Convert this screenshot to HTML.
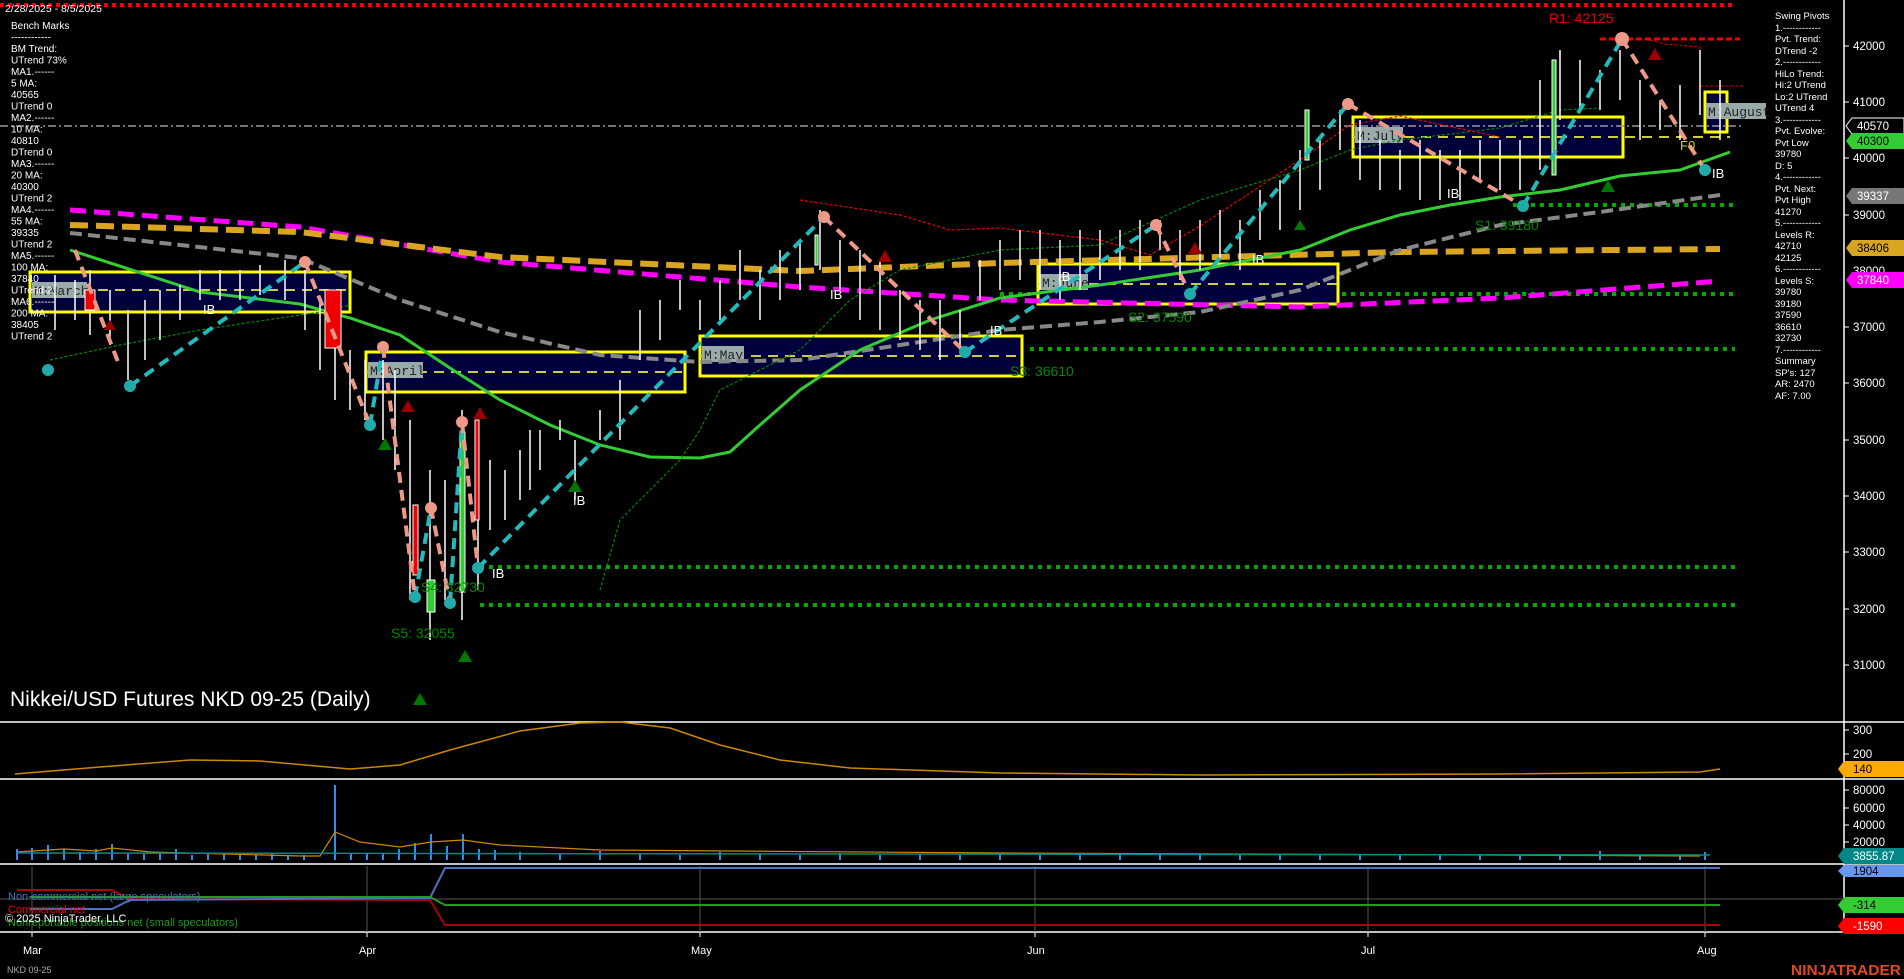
<!DOCTYPE html>
<html><head><meta charset="utf-8"><style>
html,body{margin:0;padding:0;background:#000;overflow:hidden}
svg{display:block;font-family:"Liberation Sans",Arial,sans-serif}
</style></head><body>
<svg width="1904" height="979" viewBox="0 0 1904 979" xmlns="http://www.w3.org/2000/svg">
<rect width="1904" height="979" fill="#000"/>
<line x1="0" y1="5" x2="1735" y2="5" stroke="#e00" stroke-width="4" stroke-dasharray="4,4"/>
<line x1="1600" y1="39" x2="1740" y2="39" stroke="#e00" stroke-width="3" stroke-dasharray="6,3"/>
<polyline points="1650,40 1665,44 1700,47 1700,86 1745,86" fill="none" stroke="#e00" stroke-width="1" stroke-dasharray="3,2"/>
<g stroke="#0a0" stroke-width="4" stroke-dasharray="4,5" fill="none">
<line x1="1513" y1="205" x2="1735" y2="205"/>
<line x1="1000" y1="294" x2="1735" y2="294"/>
<line x1="1030" y1="349" x2="1735" y2="349"/>
<line x1="480" y1="567" x2="1735" y2="567"/>
<line x1="480" y1="605" x2="1735" y2="605"/>
</g>
<g stroke="#ff0" stroke-width="3" fill="#00003a">
<rect x="30" y="272" width="320" height="40"/>
<rect x="366" y="352" width="319" height="40"/>
<rect x="700" y="336" width="322" height="40"/>
<rect x="1038" y="264" width="300" height="40"/>
<rect x="1353" y="117" width="270" height="40"/>
<rect x="1705" y="92" width="22" height="40"/>
</g>
<g stroke="#cc4" stroke-width="2" stroke-dasharray="10,7">
<line x1="30" y1="290" x2="350" y2="290"/>
<line x1="366" y1="372" x2="685" y2="372"/>
<line x1="700" y1="356" x2="1022" y2="356"/>
<line x1="1038" y1="284" x2="1338" y2="284"/>
<line x1="1353" y1="137" x2="1730" y2="137"/>
</g>
<line x1="0" y1="126" x2="1744" y2="126" stroke="#999" stroke-width="1.5" stroke-dasharray="8,3,2,3"/>
<g font-family="Liberation Mono,monospace" font-size="13" fill="#222">
<rect x="32" y="282" width="55" height="16" fill="#9aa"/><text x="34" y="295">M:March</text>
<rect x="368" y="362" width="55" height="16" fill="#9aa"/><text x="370" y="375">M:April</text>
<rect x="702" y="346" width="42" height="16" fill="#9aa"/><text x="704" y="359">M:May</text>
<rect x="1040" y="274" width="48" height="16" fill="#9aa"/><text x="1042" y="287">M:June</text>
<rect x="1355" y="127" width="48" height="16" fill="#9aa"/><text x="1357" y="140">M:July</text>
<rect x="1706" y="103" width="60" height="16" fill="#9aa"/><text x="1708" y="116">M:August</text>
</g>
<polyline points="70,210 300,227 500,262 800,287 1000,300 1300,307 1500,298 1720,281" fill="none" stroke="#f0f" stroke-width="5" stroke-dasharray="16,8"/>
<polyline points="70,225 300,232 500,257 800,271 1000,263 1400,252 1720,249" fill="none" stroke="#daa520" stroke-width="6" stroke-dasharray="18,8"/>
<polyline points="70,233 300,258 400,300 500,332 600,355 700,362 800,360 900,345 1000,330 1100,322 1200,312 1300,290 1400,250 1500,225 1600,212 1720,195" fill="none" stroke="#888" stroke-width="4" stroke-dasharray="12,6"/>
<polyline points="70,250 200,292 300,304 350,318 400,335 450,368 500,400 550,425 600,445 650,457 700,458 730,452 760,425 800,390 860,350 930,320 1000,298 1100,285 1200,270 1300,250 1350,230 1400,215 1450,205 1500,197 1560,190 1620,176 1680,170 1730,152" fill="none" stroke="#3c3" stroke-width="3"/>
<polyline points="50,360 120,345 200,330 280,318 320,312 350,305" fill="none" stroke="#080" stroke-width="1.2" stroke-dasharray="3,2"/>
<polyline points="600,590 620,520 640,500 660,480 680,460 700,430 720,390 740,380 760,370 800,350 850,300 900,270 950,260 1000,250 1100,245 1200,200 1300,170 1350,150 1400,140 1500,128 1560,110 1600,108" fill="none" stroke="#080" stroke-width="1.2" stroke-dasharray="3,2"/>
<polyline points="800,200 900,215 950,230 1000,228 1100,240 1150,255 1200,226 1300,160 1350,125 1400,116 1500,137" fill="none" stroke="#e00" stroke-width="1.2" stroke-dasharray="3,2"/>
<g stroke="#fff" stroke-width="1.5">
<path d="M55 275V330M75 280V320M90 270V335M110 290V345M128 310V380M145 300V360M160 290V340M180 285V320M200 270V300M220 270V300M240 270V300M260 265V295M285 260V300M305 270V330M320 300V370M335 330V400M350 350V410M365 360V420M383 360V440M395 370V470M410 420V600M430 470V640M445 480V600M462 410V620M478 420V590M490 460V530M505 470V520M520 450V500M530 430V490M540 430V470M560 420V440M575 440V500M600 410V440M620 380V440M640 310V360M660 300V340M680 280V310M700 300V330M720 280V320M740 250V300M760 270V320M780 250V300M800 240V290M820 210V270M840 240V290M860 250V320M880 260V330M900 290V340M920 300V350M940 300V360M960 310V350M980 260V300M1000 240V290M1020 230V280M1040 230V290M1060 240V300M1080 230V290M1100 230V280M1120 230V270M1140 220V270M1160 220V250M1180 230V280M1200 220V270M1220 210V260M1240 220V270M1260 190V240M1280 180V230M1300 150V210M1320 140V190M1340 110V150M1360 120V180M1380 140V190M1400 150V190M1420 140V200M1440 150V200M1460 150V200M1480 140V180M1500 140V190M1520 140V190M1540 80V170M1560 50V120M1580 60V110M1600 70V110M1620 50V100M1640 80V140M1660 100V130M1680 85V140M1700 50V115M1720 80V140"/>
</g>
<g stroke="#fff" stroke-width="1">
<rect x="85" y="290" width="10" height="20" fill="#e00"/>
<rect x="325" y="290" width="16" height="58" fill="#e00"/>
<rect x="413" y="505" width="5" height="70" fill="#e00"/>
<rect x="427" y="580" width="8" height="32" fill="#3c3"/>
<rect x="460" y="432" width="5" height="160" fill="#3c3"/>
<rect x="475" y="420" width="4" height="100" fill="#e00"/>
<rect x="815" y="235" width="3" height="30" fill="#3c3"/>
<rect x="1305" y="110" width="4" height="50" fill="#3c3"/>
<rect x="1552" y="60" width="4" height="115" fill="#3c3"/>
</g>
<g fill="none" stroke-width="4" stroke-dasharray="11,7">
<polyline stroke="#2bb" points="130,386 305,262"/>
<polyline stroke="#2bb" points="370,425 383,347"/>
<polyline stroke="#2bb" points="415,597 431,508"/>
<polyline stroke="#2bb" points="450,603 462,422"/>
<polyline stroke="#2bb" points="478,568 824,217"/>
<polyline stroke="#2bb" points="965,352 1156,225"/>
<polyline stroke="#2bb" points="1190,294 1348,104"/>
<polyline stroke="#2bb" points="1523,206 1622,39"/>
<polyline stroke="#e98" points="75,250 118,362"/>
<polyline stroke="#e98" points="305,262 370,425"/>
<polyline stroke="#e98" points="383,347 415,597"/>
<polyline stroke="#e98" points="431,508 450,603"/>
<polyline stroke="#e98" points="462,422 478,568"/>
<polyline stroke="#e98" points="824,217 965,352"/>
<polyline stroke="#e98" points="1156,225 1190,294"/>
<polyline stroke="#e98" points="1348,104 1523,206"/>
<polyline stroke="#e98" points="1622,39 1705,170"/>
</g>
<g fill="#2aa">
<circle cx="48" cy="370" r="6"/><circle cx="130" cy="386" r="6"/><circle cx="370" cy="425" r="6"/><circle cx="415" cy="597" r="6"/><circle cx="450" cy="603" r="6"/><circle cx="478" cy="568" r="6"/><circle cx="965" cy="352" r="6"/><circle cx="1190" cy="294" r="6"/><circle cx="1523" cy="206" r="6"/><circle cx="1705" cy="170" r="6"/>
</g>
<g fill="#e98">
<circle cx="305" cy="262" r="6"/><circle cx="383" cy="347" r="6"/><circle cx="431" cy="508" r="6"/><circle cx="462" cy="422" r="6"/><circle cx="824" cy="217" r="6"/><circle cx="1156" cy="225" r="6"/><circle cx="1348" cy="104" r="6"/><circle cx="1622" cy="39" r="7"/>
</g>
<g fill="#070">
<path d="M420 693l7 12h-14zM465 650l7 12h-14zM385 438l7 12h-14zM575 480l7 12h-14zM1608 180l7 12h-14zM1300 220l6 10h-12z"/>
</g>
<g fill="#900">
<path d="M1655 48l7 12h-14zM408 400l7 12h-14zM480 407l7 12h-14zM885 250l7 12h-14zM1195 242l7 12h-14zM110 320l6 10h-12z"/>
</g>
<g fill="#fff" font-size="13">
<text x="1447" y="198">IB</text><text x="830" y="299">IB</text><text x="573" y="505">IB</text><text x="492" y="578">IB</text><text x="1252" y="264">IB</text><text x="1058" y="281">IB</text><text x="990" y="335">IB</text><text x="1712" y="178">IB</text><text x="203" y="314">IB</text>
</g>
<g font-size="14" fill="#080">
<text x="1475" y="230">S1: 39180</text><text x="1128" y="322">S2: 37590</text><text x="1010" y="376">S3: 36610</text><text x="421" y="592">S4: 32730</text><text x="391" y="638">S5: 32055</text>
</g>
<text x="1680" y="150" font-size="13" fill="#cc4">F0</text>
<text x="1549" y="23" font-size="14" fill="#e00">R1: 42125</text>
<g fill="#fff" font-size="10">
<text x="5" y="12" font-size="10.5">2/28/2025 - 8/5/2025</text>
<text x="11" y="29">Bench Marks</text><text x="11" y="40.5">------------</text><text x="11" y="52">BM Trend:</text><text x="11" y="63.5">UTrend 73%</text><text x="11" y="75">MA1.------</text><text x="11" y="86.5">5 MA:</text><text x="11" y="98">40565</text><text x="11" y="109.5">UTrend 0</text><text x="11" y="121">MA2.------</text><text x="11" y="132.5">10 MA:</text><text x="11" y="144">40810</text><text x="11" y="155.5">DTrend 0</text><text x="11" y="167">MA3.------</text><text x="11" y="178.5">20 MA:</text><text x="11" y="190">40300</text><text x="11" y="201.5">UTrend 2</text><text x="11" y="213">MA4.------</text><text x="11" y="224.5">55 MA:</text><text x="11" y="236">39335</text><text x="11" y="247.5">UTrend 2</text><text x="11" y="259">MA5.------</text><text x="11" y="270.5">100 MA:</text><text x="11" y="282">37840</text><text x="11" y="293.5">UTrend 2</text><text x="11" y="305">MA6.------</text><text x="11" y="316.5">200 MA:</text><text x="11" y="328">38405</text><text x="11" y="339.5">UTrend 2</text>
</g>
<g fill="#fff" font-size="9.5">
<text x="1775" y="19">Swing Pivots</text><text x="1775" y="31">1.------------</text><text x="1775" y="42">Pvt. Trend:</text><text x="1775" y="54">DTrend -2</text><text x="1775" y="65">2.------------</text><text x="1775" y="77">HiLo Trend:</text><text x="1775" y="88">Hi:2 UTrend</text><text x="1775" y="100">Lo:2 UTrend</text><text x="1775" y="111">UTrend 4</text><text x="1775" y="123">3.------------</text><text x="1775" y="134">Pvt. Evolve:</text><text x="1775" y="146">Pvt Low</text><text x="1775" y="157">39780</text><text x="1775" y="169">D: 5</text><text x="1775" y="180">4.------------</text><text x="1775" y="192">Pvt. Next:</text><text x="1775" y="203">Pvt High</text><text x="1775" y="215">41270</text><text x="1775" y="226">5.------------</text><text x="1775" y="238">Levels R:</text><text x="1775" y="249">42710</text><text x="1775" y="261">42125</text><text x="1775" y="272">6.------------</text><text x="1775" y="284">Levels S:</text><text x="1775" y="295">39780</text><text x="1775" y="307">39180</text><text x="1775" y="318">37590</text><text x="1775" y="330">36610</text><text x="1775" y="341">32730</text><text x="1775" y="353">7.------------</text><text x="1775" y="364">Summary</text><text x="1775" y="376">SP's: 127</text><text x="1775" y="387">AR: 2470</text><text x="1775" y="399">AF: 7.00</text>
</g>
<text x="10" y="706" font-size="21" fill="#fff">Nikkei/USD Futures NKD 09-25 (Daily)</text>
<g stroke="#fff" stroke-width="1.5">
<line x1="0" y1="722" x2="1904" y2="722"/><line x1="0" y1="779" x2="1904" y2="779"/><line x1="0" y1="864" x2="1904" y2="864"/><line x1="0" y1="932" x2="1844" y2="932"/>
<line x1="1844" y1="0" x2="1844" y2="932"/>
</g>
<g fill="#fff" font-size="11.5">
<g stroke="#fff"><path d="M1844 46h5M1844 102h5M1844 158h5M1844 215h5M1844 327h5M1844 383h5M1844 440h5M1844 496h5M1844 552h5M1844 609h5M1844 665h5M1844 730h5M1844 754h5M1844 790h5M1844 808h5M1844 825h5M1844 842h5"/></g>
<text x="1853" y="50">42000</text><text x="1853" y="106">41000</text><text x="1853" y="162">40000</text><text x="1853" y="219">39000</text><text x="1853" y="275">38000</text><text x="1853" y="331">37000</text><text x="1853" y="387">36000</text><text x="1853" y="444">35000</text><text x="1853" y="500">34000</text><text x="1853" y="556">33000</text><text x="1853" y="613">32000</text><text x="1853" y="669">31000</text>
<text x="1853" y="734">300</text><text x="1853" y="758">200</text><text x="1853" y="794">80000</text><text x="1853" y="812">60000</text><text x="1853" y="829">40000</text><text x="1853" y="846">20000</text>
</g>
<g font-size="11.5">
<path d="M1852 118h52v16h-52l-6-8z" fill="#000" stroke="#fff"/><text x="1857" y="130" fill="#fff">40570</text>
<path d="M1852 133h52v16h-52l-6-8z" fill="#3c3"/><text x="1857" y="145" fill="#000">40300</text>
<path d="M1852 188h52v16h-52l-6-8z" fill="#777"/><text x="1857" y="200" fill="#fff">39337</text>
<path d="M1852 240h52v16h-52l-6-8z" fill="#daa520"/><text x="1857" y="252" fill="#000">38406</text>
<path d="M1852 272h52v16h-52l-6-8z" fill="#f0f"/><text x="1857" y="284" fill="#fff">37840</text>
<path d="M1844 761h60v16h-60l-6-8z" fill="#fa0"/><text x="1853" y="773" fill="#000">140</text>
<path d="M1844 848h60v16h-60l-6-8z" fill="#088"/><text x="1853" y="860" fill="#fff">3855.87</text>
<path d="M1844 865h60v12h-60l-6-6z" fill="#69e"/><text x="1853" y="875" fill="#000">1904</text>
<path d="M1844 897h60v16h-60l-6-8z" fill="#3c3"/><text x="1853" y="909" fill="#000">-314</text>
<path d="M1844 918h60v16h-60l-6-8z" fill="#f00"/><text x="1853" y="930" fill="#fff">-1590</text>
</g>
<polyline points="15,774 100,767 190,760 260,761 350,769 400,765 450,750 520,731 580,723 620,722 670,728 720,745 780,760 850,768 1000,773 1200,775 1500,774 1700,772 1720,769" fill="none" stroke="#c80" stroke-width="1.5"/>
<g stroke="#2a8ff0" stroke-width="2">
<path d="M17 860v-11M32 860v-12M48 860v-15M64 860v-11M80 860v-8M96 860v-11M112 860v-16M128 860v-7M144 860v-6M160 860v-7M176 860v-11M192 860v-5M208 860v-6M224 860v-7M240 860v-5M256 860v-5M272 860v-6M288 860v-5M304 860v-5M335 860v-75M351 860v-7M367 860v-7M383 860v-7M399 860v-11M415 860v-17M431 860v-26M447 860v-14M463 860v-26M479 860v-11M495 860v-10"/>
<path d="M520 860v-8M560 860v-6M600 860v-9M640 860v-7M680 860v-5M720 860v-8M760 860v-6M800 860v-5M840 860v-7M880 860v-5M920 860v-6M960 860v-5M1000 860v-6M1040 860v-5M1080 860v-7M1120 860v-5M1160 860v-6M1200 860v-5M1240 860v-6M1280 860v-5M1320 860v-6M1360 860v-5M1400 860v-6M1440 860v-5M1480 860v-6M1520 860v-5M1560 860v-6M1600 860v-9M1640 860v-5M1680 860v-6M1705 860v-8"/>
</g>
<polyline points="17,852 64,849 96,851 112,848 150,852 300,856 320,856 335,832 360,842 400,847 431,842 463,840 500,845 600,850 1000,853 1700,856" fill="none" stroke="#c80" stroke-width="1.2"/>
<line x1="17" y1="853" x2="1710" y2="855" stroke="#088" stroke-width="1.5"/>
<g stroke="#555" stroke-width="1"><path d="M32 866v66M367 866v66M700 866v66M1035 866v66M1368 866v66M1705 866v66"/><line x1="0" y1="899" x2="1844" y2="899"/></g>
<polyline points="17,890 112,890 130,899 430,900 445,925 1720,925" fill="none" stroke="#a00" stroke-width="2"/>
<polyline points="30,909 112,909 130,900 430,898 445,868 1720,868" fill="none" stroke="#4a72c0" stroke-width="2"/>
<polyline points="30,897 430,897 445,905 1720,905" fill="none" stroke="#292" stroke-width="2"/>
<g font-size="11">
<text x="8" y="900" fill="#4a72c0">Non-commercial net (large speculators)</text>
<text x="8" y="913" fill="#e00">Commercial net</text>
<text x="8" y="926" fill="#292">Nonreportable positions net (small speculators)</text>
<text x="5" y="922" fill="#fff">© 2025 NinjaTrader, LLC</text>
</g>
<g stroke="#fff"><path d="M32 932v5M367 932v5M700 932v5M1035 932v5M1368 932v5M1705 932v5"/></g>
<g fill="#fff" font-size="11"><text x="23" y="954">Mar</text><text x="359" y="954">Apr</text><text x="691" y="954">May</text><text x="1027" y="954">Jun</text><text x="1361" y="954">Jul</text><text x="1697" y="954">Aug</text></g>
<text x="7" y="973" font-size="9" fill="#aaa">NKD 09-25</text>
<text x="1791" y="975" font-size="15" font-weight="bold" fill="#e04a1c" textLength="110" lengthAdjust="spacingAndGlyphs">NINJATRADER</text>
</svg>
</body></html>
